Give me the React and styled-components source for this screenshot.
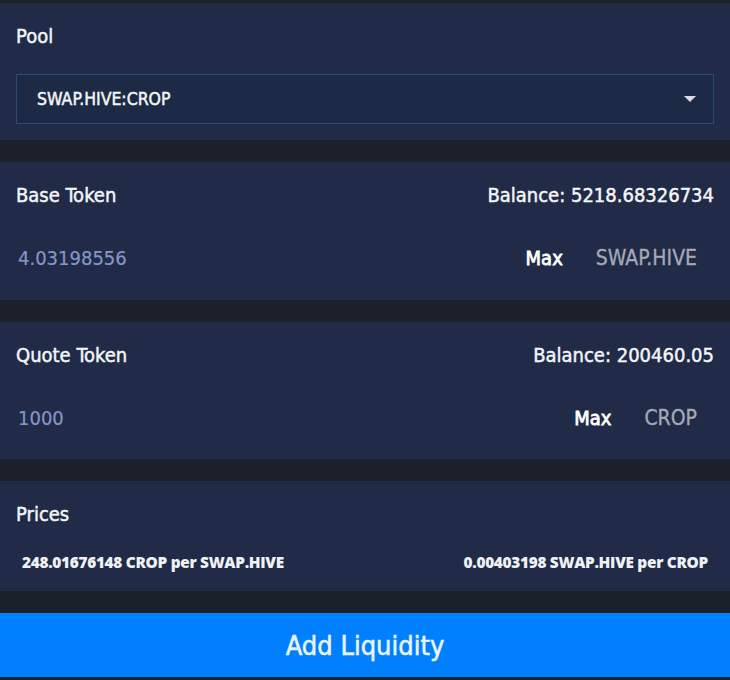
import React from 'react';
import styled, { createGlobalStyle } from 'styled-components';

const GlobalStyle = createGlobalStyle`
  body {
    margin: 0;
    background: #1b202b;
    font-family: 'Liberation Sans Narrow', 'DejaVu Sans Condensed', 'Liberation Sans', sans-serif;
  }
`;

const Page = styled.div`
  width: 730px;
  height: 680px;
  padding-top: 3px;
  box-sizing: border-box;
  display: flex;
  flex-direction: column;
  gap: 22px;
  background: #1b202b;
  color: #f2f4f8;
`;

const Panel = styled.section`
  background: #212a46;
  height: ${(p) => p.h}px;
  flex-shrink: 0;
  box-sizing: border-box;
  padding: 21px 16px 0;
  display: flex;
  flex-direction: column;
  gap: ${(p) => p.gap}px;
`;

const Row = styled.div`
  display: flex;
  align-items: center;
  justify-content: space-between;
`;

const Title = styled.h3`
  margin: 0;
  font-size: 20px;
  font-weight: normal;
  line-height: 24px;
  color: #f4f6fa;
  -webkit-text-stroke: 0.45px currentColor;
`;

const Select = styled.div`
  height: 50px;
  box-sizing: border-box;
  border: 1px solid #2c4874;
  background: #1c2a45;
  display: flex;
  align-items: center;
  justify-content: space-between;
  padding: 0 17px 0 20px;
  font-size: 17.5px;
  color: #f4f6fa;
  -webkit-text-stroke: 0.45px currentColor;
`;

const Caret = styled.span`
  width: 0;
  height: 0;
  border-left: 6px solid transparent;
  border-right: 6px solid transparent;
  border-top: 6px solid #d9dce3;
`;

const Amount = styled.div`
  padding-left: 2px;
  font-size: 20px;
  color: #8496c6;
  -webkit-text-stroke: 0.2px currentColor;
`;

const Controls = styled.div`
  display: flex;
  align-items: center;
  gap: 33px;
  padding-right: 17px;
`;

const MaxButton = styled.span`
  font-size: 20px;
  color: #ffffff;
  -webkit-text-stroke: 0.8px currentColor;
`;

const TokenName = styled.span`
  font-size: 21px;
  color: #a4a9b6;
  -webkit-text-stroke: 0.3px currentColor;
`;

const PriceRow = styled(Row)`
  padding: 0 6px;
  font-family: 'Open Sans', sans-serif;
  font-weight: 800;
  font-size: 15.4px;
  color: #eef1f6;
  letter-spacing: -0.3px;
`;

const AddButton = styled.button`
  height: 64px;
  flex-shrink: 0;
  border: 0;
  background: #0080ff;
  color: #eef4ff;
  font-family: inherit;
  font-size: 27px;
  -webkit-text-stroke: 0.5px currentColor;
  cursor: pointer;
`;

const TokenPanel = ({ label, balance, amount, token, h }) => (
  <Panel h={h} gap={39}>
    <Row>
      <Title>{label}</Title>
      <Title>Balance: {balance}</Title>
    </Row>
    <Row>
      <Amount>{amount}</Amount>
      <Controls>
        <MaxButton>Max</MaxButton>
        <TokenName>{token}</TokenName>
      </Controls>
    </Row>
  </Panel>
);

export default function App() {
  return (
    <>
      <GlobalStyle />
      <Page>
        <Panel h={137} gap={26}>
          <Title>Pool</Title>
          <Select>
            <span>SWAP.HIVE:CROP</span>
            <Caret />
          </Select>
        </Panel>
        <TokenPanel h={138} label="Base Token" balance="5218.68326734" amount="4.03198556" token="SWAP.HIVE" />
        <TokenPanel h={137} label="Quote Token" balance="200460.05" amount="1000" token="CROP" />
        <Panel h={110} gap={26}>
          <Title>Prices</Title>
          <PriceRow>
            <span>248.01676148 CROP per SWAP.HIVE</span>
            <span>0.00403198 SWAP.HIVE per CROP</span>
          </PriceRow>
        </Panel>
        <AddButton>Add Liquidity</AddButton>
      </Page>
    </>
  );
}
